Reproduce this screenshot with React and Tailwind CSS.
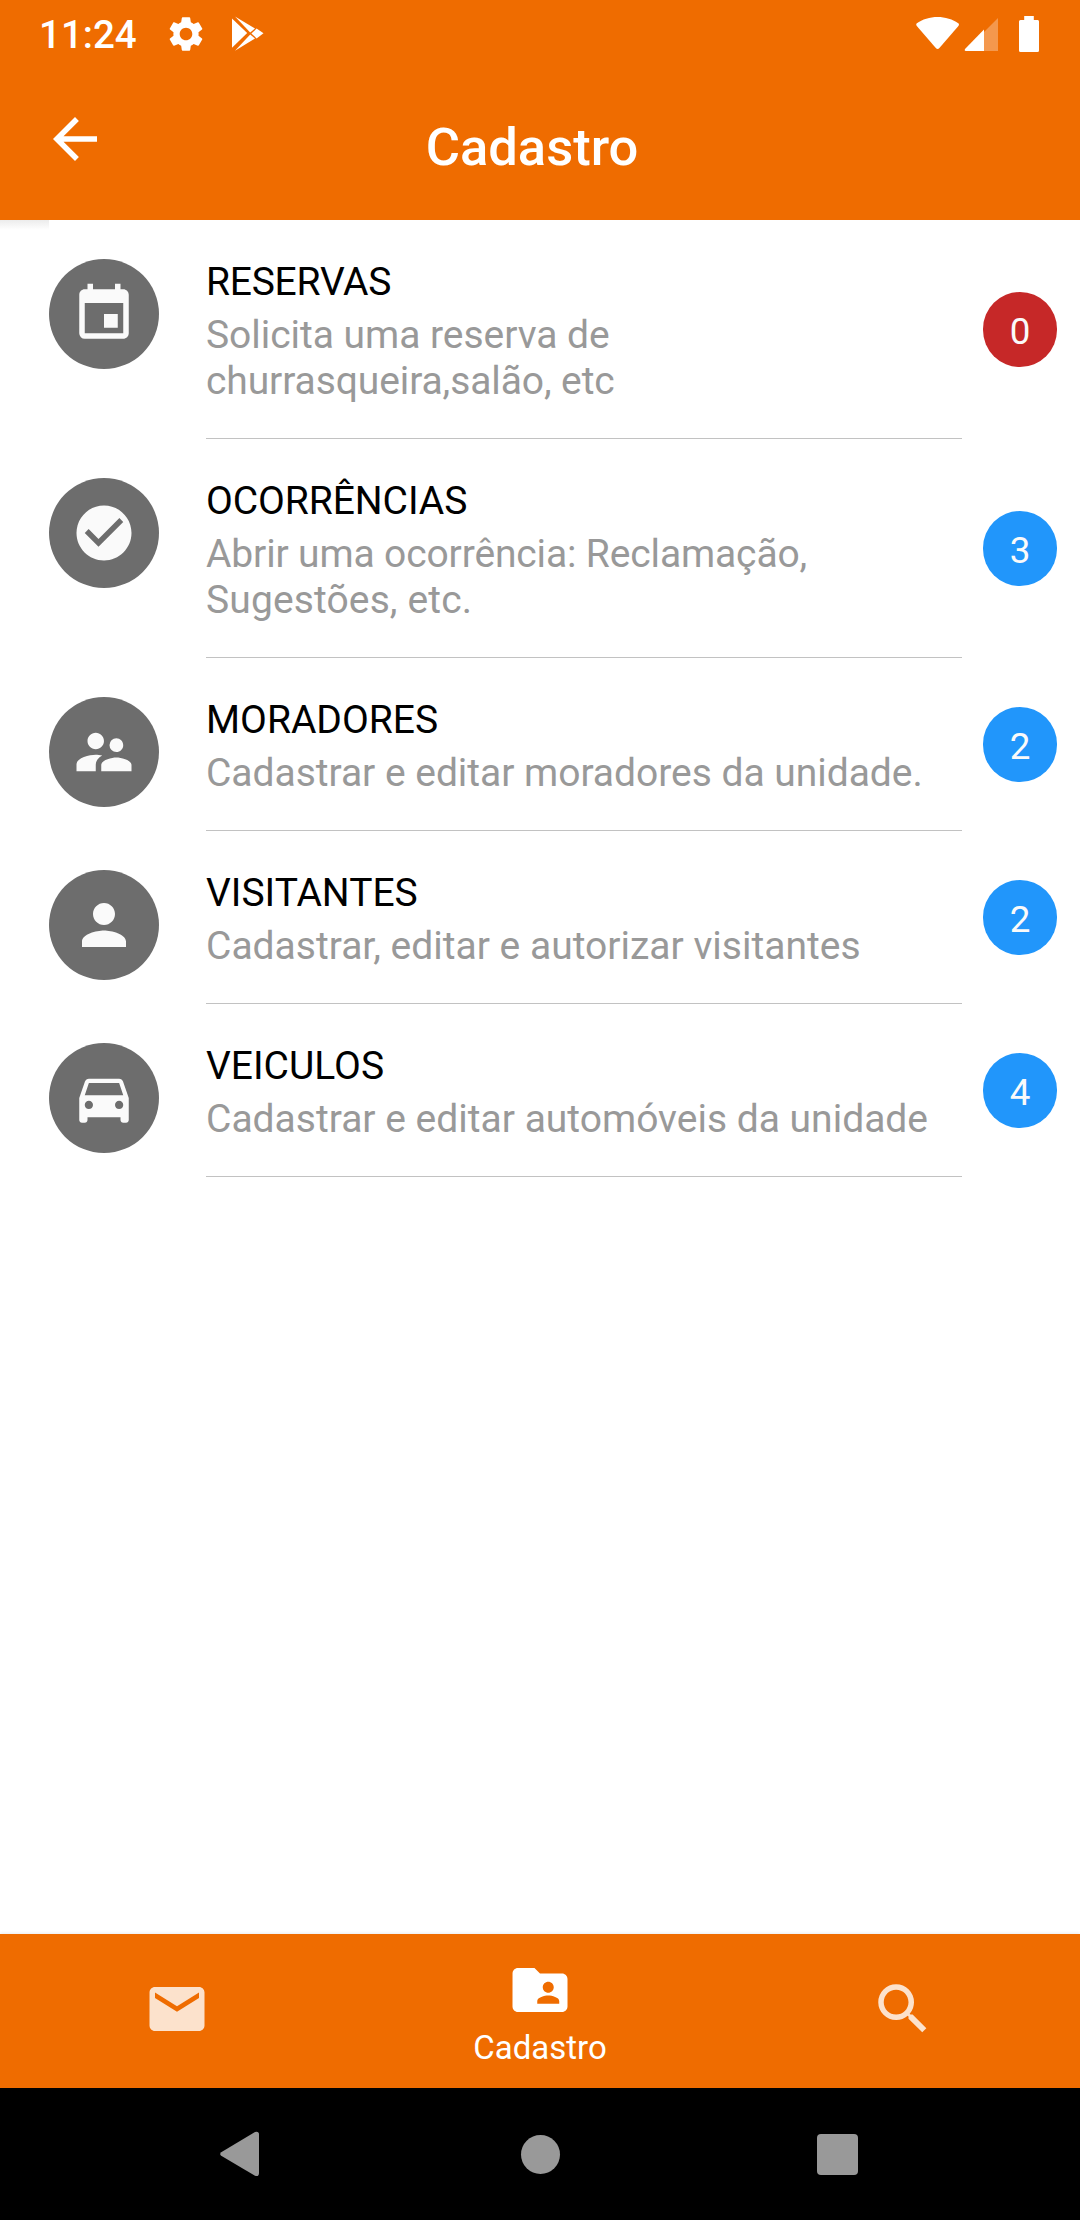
import {
  MdArrowBack,
  MdCheckCircle,
  MdDirectionsCar,
  MdEmail,
  MdEvent,
  MdFolderShared,
  MdPerson,
  MdSearch,
  MdSettings,
  MdSupervisorAccount,
} from "react-icons/md";

const items = [
  {
    title: "RESERVAS",
    titleClass: "tracking-[-0.25px]",
    lines: [
      { text: "Solicita uma reserva de", className: "tracking-[-0.04px]" },
      { text: "churrasqueira,salão, etc", className: "tracking-[-0.1px]" },
    ],
    count: 0,
    Icon: MdEvent,
  },
  {
    title: "OCORRÊNCIAS",
    titleClass: "tracking-[-0.07px]",
    lines: [
      { text: "Abrir uma ocorrência: Reclamação,", className: "tracking-[-0.14px]" },
      { text: "Sugestões, etc.", className: "tracking-[0.12px]" },
    ],
    count: 3,
    Icon: MdCheckCircle,
  },
  {
    title: "MORADORES",
    titleClass: "tracking-normal",
    lines: [{ text: "Cadastrar e editar moradores da unidade.", className: "tracking-[-0.03px]" }],
    count: 2,
    Icon: MdSupervisorAccount,
  },
  {
    title: "VISITANTES",
    titleClass: "tracking-normal",
    lines: [{ text: "Cadastrar, editar e autorizar visitantes", className: "tracking-normal" }],
    count: 2,
    Icon: MdPerson,
  },
  {
    title: "VEICULOS",
    titleClass: "tracking-normal",
    lines: [{ text: "Cadastrar e editar automóveis da unidade", className: "tracking-normal" }],
    count: 4,
    Icon: MdDirectionsCar,
  },
];

function StatusBar() {
  return (
    <div className="flex h-[66px] items-center pt-[1px] pl-[39px] pr-[40px] text-white">
      <span className="w-[126px] pt-[2px] text-[38.5px] leading-[63px] font-medium">11:24</span>
      <MdSettings className="size-[42px]" />
      <svg className="ml-[23px] h-[36px] w-[36px]" viewBox="230 16 36 36" fill="currentColor">
        <path d="M232 18.5v29.3L247.2 33z" />
        <path d="M235 16.6 255 28.4 250.2 32.4z" />
        <path d="M235 50.8 255 38.6 250.2 34.6z" />
        <path d="M251.4 33.5 256.6 28.6 263.5 33.2 256.6 38.4z" />
      </svg>
      <svg className="ml-auto h-[36px] w-[124px]" viewBox="916 15 124 36" fill="currentColor">
        <path d="M916.6 22.6C928 13.8 947 13.8 958.6 22.6Q959.4 23.6 958.4 24.9L939.4 47Q937.6 48.8 935.8 47L916.8 24.9Q915.8 23.6 916.6 22.6z" />
        <path d="M998 17v33h-14V31z" fillOpacity="0.3" />
        <path d="M984 28.5V50h-18.4Q964 49.5 965 48z" />
        <path d="M1024.2 15h9.6v4h4Q1039 19 1039 20.5v29Q1039 51 1037.5 51h-17Q1019 51 1019 49.5v-29Q1019 19 1020.5 19h3.700z" />
      </svg>
    </div>
  );
}

function Item({ title, titleClass, lines, count, Icon }) {
  return (
    <li className="flex pl-[49px]">
      <div className="mt-[39px] flex size-[110px] shrink-0 items-center justify-center rounded-full bg-[#6d6d6d]">
        <Icon className="size-[66px] text-[#fafafa]" />
      </div>
      <div className="ml-[47px] w-[756px] shrink-0 border-b border-[#c2c2c2] pt-[39px] pb-[34px]">
        <h2 className={`h-[53px] text-[39px] leading-[46px] text-black ${titleClass}`}>{title}</h2>
        {lines.map((line) => (
          <p
            key={line.text}
            className={`text-[39px] leading-[46px] whitespace-nowrap text-[#999999] ${line.className}`}
          >
            {line.text}
          </p>
        ))}
      </div>
      <div
        className={`ml-[21px] flex h-[75px] w-[74px] items-center justify-center self-center rounded-full pt-[5px] text-[36.75px] leading-none text-[#fafafa] ${
          count === 0 ? "bg-[#c62828]" : "bg-[#2196fb]"
        }`}
      >
        {count}
      </div>
    </li>
  );
}

export default function App() {
  return (
    <div className="flex h-[2220px] w-[1080px] flex-col overflow-hidden bg-white font-[Roboto,sans-serif]">
      <header className="h-[220px] shrink-0 bg-[#ef6c00]">
        <StatusBar />
        <div className="grid h-[154px] grid-cols-[200px_1fr_216px] text-white">
          <MdArrowBack className="mt-[40px] ml-[42px] size-[66px]" />
          <h1 className="pt-[50px] text-center text-[52.5px] leading-[62px] font-medium">Cadastro</h1>
        </div>
      </header>
      <main className="relative flex-1">
        <div className="absolute top-0 left-0 h-[10px] w-[49px] bg-linear-to-b from-[#ececec] to-white" />
        <ul>
          {items.map((item) => (
            <Item key={item.title} {...item} />
          ))}
        </ul>
      </main>
      <nav className="grid h-[154px] shrink-0 grid-cols-[354px_372px_354px] bg-[#ef6c00] text-white shadow-[0_-1px_3px_rgba(0,0,0,0.08)]">
        <div className="flex items-center justify-center pb-[4px]">
          <MdEmail className="size-[66px] text-[#fce2cc]" />
        </div>
        <div className="flex flex-col items-center pt-[23px]">
          <MdFolderShared className="size-[66px]" />
          <span className="mt-[5px] text-[33px] leading-[39px]">Cadastro</span>
        </div>
        <div className="flex items-center justify-center pb-[4px]">
          <MdSearch className="size-[66px] text-[#fce2cc]" />
        </div>
      </nav>
      <footer className="flex h-[132px] shrink-0 items-center justify-between bg-black pr-[222px] pl-[220px] text-[#999999]">
        <svg className="h-[46px] w-[40px]" viewBox="0 0 40 46" fill="currentColor">
          <path d="M1.200 21.2 35 1Q39 0 39 3.500V42Q39 46 35 44.8L1.200 24.800Q-.8 23 1.200 21.200z" />
        </svg>
        <div className="ml-[4px] size-[39px] rounded-full bg-[#999999]" />
        <div className="size-[41px] rounded-[4px] bg-[#999999]" />
      </footer>
    </div>
  );
}
